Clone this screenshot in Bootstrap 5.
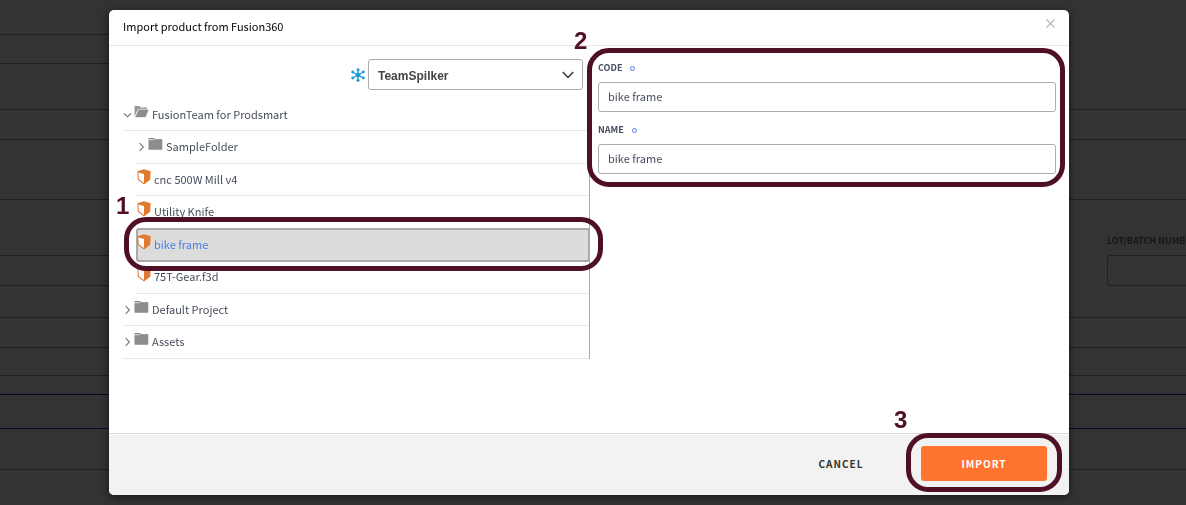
<!DOCTYPE html>
<html lang="en">
<head>
<meta charset="utf-8">
<meta name="viewport" content="width=device-width, initial-scale=1">
<title>Import product from Fusion360</title>
<link href="https://cdn.jsdelivr.net/npm/bootstrap@5.3.0/dist/css/bootstrap.min.css" rel="stylesheet">
<style>
  :root { --ink: #454d5d; --marker: #4f1027; --edge: #aaacb5; }
  body { background: #333; color: var(--ink); font-family: "Noto Sans CJK SC", sans-serif; font-size: 11px; line-height: 20px; }

  /* dimmed form behind the dialog */
  .backdrop-form { overflow: hidden; }
  .band { border-bottom: 1px solid #202020; flex: none; }
  .band-navy { border-color: #090924; }
  .h-19 { height: 19px; } .h-28 { height: 28px; } .h-30 { height: 30px; }
  .h-35 { height: 35px; } .h-41 { height: 41px; } .h-60 { height: 60px; }
  .h-110 { height: 110px; }
  .side-l { width: 109px; }
  .side-r { width: 79px; }
  .lot-label { color: #151617; font-size: 9px; font-weight: 700; line-height: 16px; white-space: nowrap; margin-top: 33px; }
  .lot-input { background: transparent; border: 1px solid #1f2021; border-radius: 3px; height: 31px; width: 160px; margin-top: 6px; }

  /* dialog */
  .stage { padding: 10px 8px 10px 0; }
  .dialog { max-width: 960px; width: 100%; }
  .dialog .modal-content { background: #fff; border: 0; border-radius: 5px; box-shadow: 0 2px 8px rgba(0,0,0,.6); color: var(--ink); }
  .dialog .modal-header { border-bottom: 1px solid #e6e6e6; padding: 0 14px; height: 36px; }
  .dialog .modal-title { color: #000; font-size: 11px; line-height: 32px; margin-bottom: 4px; }
  .close-x { background: none; border: 0; padding: 0; line-height: 0; margin-bottom: 8px; }
  .dialog .modal-body { padding: 13px 13px 74px 14px; }
  .dialog .modal-footer { background: #f2f2f2; border-top: 1px solid #d6d6d6; box-shadow: inset 0 1px 0 #fff; border-radius: 0 0 5px 5px; padding: 12px 22px 14px; gap: 12px; }
  .dialog .modal-footer > * { margin: 0; }

  .browser { width: 467px; flex: none; }
  .fields { padding: 1px 0 0 8px; min-width: 0; }
  .team { width: 215px; height: 31px; margin-right: 7px; padding: 2px 30px 0 9px; border: 1px solid var(--edge); border-radius: 3px; color: #444;
    font: 700 12px/20px "Liberation Sans", sans-serif;
    background: #fff url("data:image/svg+xml,%3Csvg xmlns='http://www.w3.org/2000/svg' viewBox='0 0 12 8'%3E%3Cpath d='M.8 1l5.2 5.4L11.200 1' fill='none' stroke='%23333' stroke-width='1.400'/%3E%3C/svg%3E") no-repeat right 8px center / 12px 8px; }
  .hub { margin-right: 3px; }

  .tree { border-right: 1px solid #aaa; margin-top: 9px; }
  .tree li { height: 32px; border-bottom: 1px solid #e6e6e6; position: relative; }
  .tree li:nth-child(even) { height: 33px; }
  .tree a { color: var(--ink); text-decoration: none; height: 100%; }
  .tree a svg { flex: none; }
  .tree a span { margin-bottom: 2px; }
  .tree .lvl { margin-left: 14px; }
  .tw { margin: 0 1px 0 0; }
  .ico-up { margin: 0 3px 6px 0; }
  .tree li.picked { background: #dcdcdc; border: 2px solid #aaa; border-radius: 3px; height: 34px; margin: -1px -1px -1px 13px; z-index: 1; }
  .tree .picked a { color: #4b7ee8; margin-left: -1px; }

  .field-label { font-size: 9px; font-weight: 700; line-height: 16px; }
  .req { width: 5px; height: 5px; border: 1px solid #4b7ee8; border-radius: 50%; margin-left: 8px; }
  .entry { height: 30px; padding: 0 9px 2px; border: 1px solid var(--edge); border-radius: 3px; color: var(--ink); font-size: 11px; line-height: 20px; margin-top: 6px; }
  .field + .field { margin-top: 10px; }

  .act { border: 0; border-radius: 3px; height: 35px; font-size: 10px; font-weight: 700; letter-spacing: 1px; line-height: 20px; padding: 0; color: #333; }
  .act-cancel { width: 136px; }
  .act-import, .act-import:hover { width: 126px; background: #ff752f; color: #fff; }

  /* numbered markers laid over the dialog */
  .ring { position: absolute; border: 5px solid var(--marker); border-radius: 22px; pointer-events: none; z-index: 3; }
  .num { position: absolute; color: var(--marker); font: 700 24px/24px "Liberation Sans", sans-serif; z-index: 3; }
  .ring-1 { inset: -13px -15px -11px -14px; } .num-1 { left: -22px; top: -36px; }
  .ring-2 { inset: -12px -9px -13px -11px; } .num-2 { left: -24px; top: -31px; }
  .ring-3 { inset: -13px -15px -11px -15px; } .num-3 { left: -27px; top: -38px; }
</style>
</head>
<body>
<svg class="d-none" aria-hidden="true">
  <symbol id="right" viewBox="0 0 10 10"><path d="M2.600 1.200l3.800 3.800-3.800 3.800" fill="none" stroke="#777" stroke-width="1.100"/></symbol>
  <symbol id="down" viewBox="0 0 10 10"><path d="M1 3.500L4.500 6.800 8 3.500" fill="none" stroke="#777" stroke-width="1.100"/></symbol>
  <symbol id="folder" viewBox="0 0 15 12"><path d="M.5 0h5.700l1 1H14v1.500H.5z" fill="#c9c9c9"/><path d="M.5 0h5.500l.8 1H.5zM.5 2.200h4.800L7 1.200h7.300v10.500H.5z" fill="#8c8c8c"/></symbol>
  <symbol id="open" viewBox="0 0 15 12"><path d="M.5 0h5l1.200 1.600H13v1.800H4L.5 10.500z" fill="#999"/><path d="M4.500 3.300H15L11.800 11.500H.8z" fill="#8c8c8c" stroke="#fff" stroke-width=".6"/></symbol>
  <symbol id="part" viewBox="0 0 14 16"><path d="M.3 2.200L7 .3l6.700 1.900-.5 8.600L7 15.400.8 10.800z" fill="#df7a31"/><path d="M1.300 3.400L7 5v8.900L1.900 10.200z" fill="#fff"/></symbol>
</svg>

<div class="backdrop-form position-fixed top-0 start-0 w-100 h-100 d-flex justify-content-between" aria-hidden="true">
  <div class="side-l">
    <div class="band h-35"></div><div class="band" style="height:29px"></div><div class="band" style="height:46px"></div>
    <div class="band h-30"></div><div class="band h-60"></div><div class="band" style="height:56px"></div>
    <div class="band h-30"></div><div class="band" style="height:32px"></div><div class="band h-30"></div>
    <div class="band h-28"></div><div class="band band-navy h-19"></div><div class="band band-navy" style="height:34px"></div>
    <div class="band h-41"></div>
  </div>
  <div class="flex-fill d-flex flex-column">
    <div class="band h-110"></div><div class="band h-30"></div><div class="band h-60"></div>
    <div class="band d-flex flex-column align-items-end" style="height:118px">
      <div class="side-r">
        <label class="lot-label d-block" for="lot">LOT/BATCH NUMBER</label>
        <input class="lot-input d-block" id="lot" type="text" tabindex="-1">
      </div>
    </div>
    <div class="band h-30"></div><div class="band h-28"></div><div class="band band-navy h-19"></div>
    <div class="band band-navy" style="height:34px"></div><div class="band h-41"></div>
  </div>
</div>

<main class="stage position-relative d-flex justify-content-center">
  <div class="dialog" role="dialog" aria-labelledby="dlg-title">
    <div class="modal-content">
      <div class="modal-header">
        <h1 class="modal-title fw-normal" id="dlg-title">Import product from Fusion360</h1>
        <button class="close-x" type="button" aria-label="Close"><svg width="9" height="9" viewBox="0 0 9 9"><path d="M.5.5l8 8m0-8l-8 8" stroke="#bbb" stroke-width="1.300"/></svg></button>
      </div>
      <div class="modal-body d-flex">
        <section class="browser">
          <div class="d-flex justify-content-end align-items-center">
            <svg class="hub" width="14" height="14" viewBox="0 0 14 14"><g stroke="#1a98d5" fill="#1a98d5"><path d="M7 2v10M2 4.300l10 5.400M12 4.300L2 9.700" stroke-width="1.200"/><circle cx="7" cy="7" r="2"/><g stroke="none"><circle cx="7" cy="1.700" r="1.500"/><circle cx="7" cy="12.300" r="1.500"/><circle cx="1.700" cy="4" r="1.400"/><circle cx="12.300" cy="4" r="1.400"/><circle cx="1.700" cy="10" r="1.400"/><circle cx="12.300" cy="10" r="1.400"/></g></g></svg>
            <select class="form-select team" aria-label="Team"><option>TeamSpilker</option></select>
          </div>
          <ul class="tree list-unstyled mb-0">
            <li><a href="#" class="d-flex align-items-center"><svg class="tw" width="10" height="10"><use href="#down"/></svg><svg class="ico-up" width="15" height="12"><use href="#open"/></svg><span>FusionTeam for Prodsmart</span></a></li>
            <li class="lvl"><a href="#" class="d-flex align-items-center"><svg class="tw" width="10" height="10"><use href="#right"/></svg><svg class="ico-up" width="15" height="12"><use href="#folder"/></svg><span>SampleFolder</span></a></li>
            <li class="lvl"><a href="#" class="d-flex align-items-center"><svg class="ico-up" width="14" height="16"><use href="#part"/></svg><span>cnc 500W Mill v4</span></a></li>
            <li class="lvl"><a href="#" class="d-flex align-items-center"><svg class="ico-up" width="14" height="16"><use href="#part"/></svg><span>Utility Knife</span></a></li>
            <li class="lvl picked"><a href="#" class="d-flex align-items-center"><svg class="ico-up" width="14" height="16"><use href="#part"/></svg><span>bike frame</span></a><span class="ring ring-1"></span><span class="num num-1">1</span></li>
            <li class="lvl"><a href="#" class="d-flex align-items-center"><svg class="ico-up" width="14" height="16"><use href="#part"/></svg><span>75T-Gear.f3d</span></a></li>
            <li><a href="#" class="d-flex align-items-center"><svg class="tw" width="10" height="10"><use href="#right"/></svg><svg class="ico-up" width="15" height="12"><use href="#folder"/></svg><span>Default Project</span></a></li>
            <li><a href="#" class="d-flex align-items-center"><svg class="tw" width="10" height="10"><use href="#right"/></svg><svg class="ico-up" width="15" height="12"><use href="#folder"/></svg><span>Assets</span></a></li>
          </ul>
        </section>
        <section class="fields flex-fill">
          <div class="position-relative">
            <div class="field">
              <div class="d-flex align-items-center"><label class="field-label" for="code">CODE</label><span class="req"></span></div>
              <input class="form-control entry" id="code" type="text" value="bike frame">
            </div>
            <div class="field">
              <div class="d-flex align-items-center"><label class="field-label" for="name">NAME</label><span class="req"></span></div>
              <input class="form-control entry" id="name" type="text" value="bike frame">
            </div>
            <span class="ring ring-2"></span><span class="num num-2">2</span>
          </div>
        </section>
      </div>
      <div class="modal-footer">
        <button class="btn act act-cancel" type="button">CANCEL</button>
        <div class="position-relative">
          <button class="btn act act-import d-block" type="button">IMPORT</button>
          <span class="ring ring-3"></span><span class="num num-3">3</span>
        </div>
      </div>
    </div>
  </div>
</main>
<script src="https://cdn.jsdelivr.net/npm/bootstrap@5.3.0/dist/js/bootstrap.bundle.min.js"></script>
</body>
</html>
